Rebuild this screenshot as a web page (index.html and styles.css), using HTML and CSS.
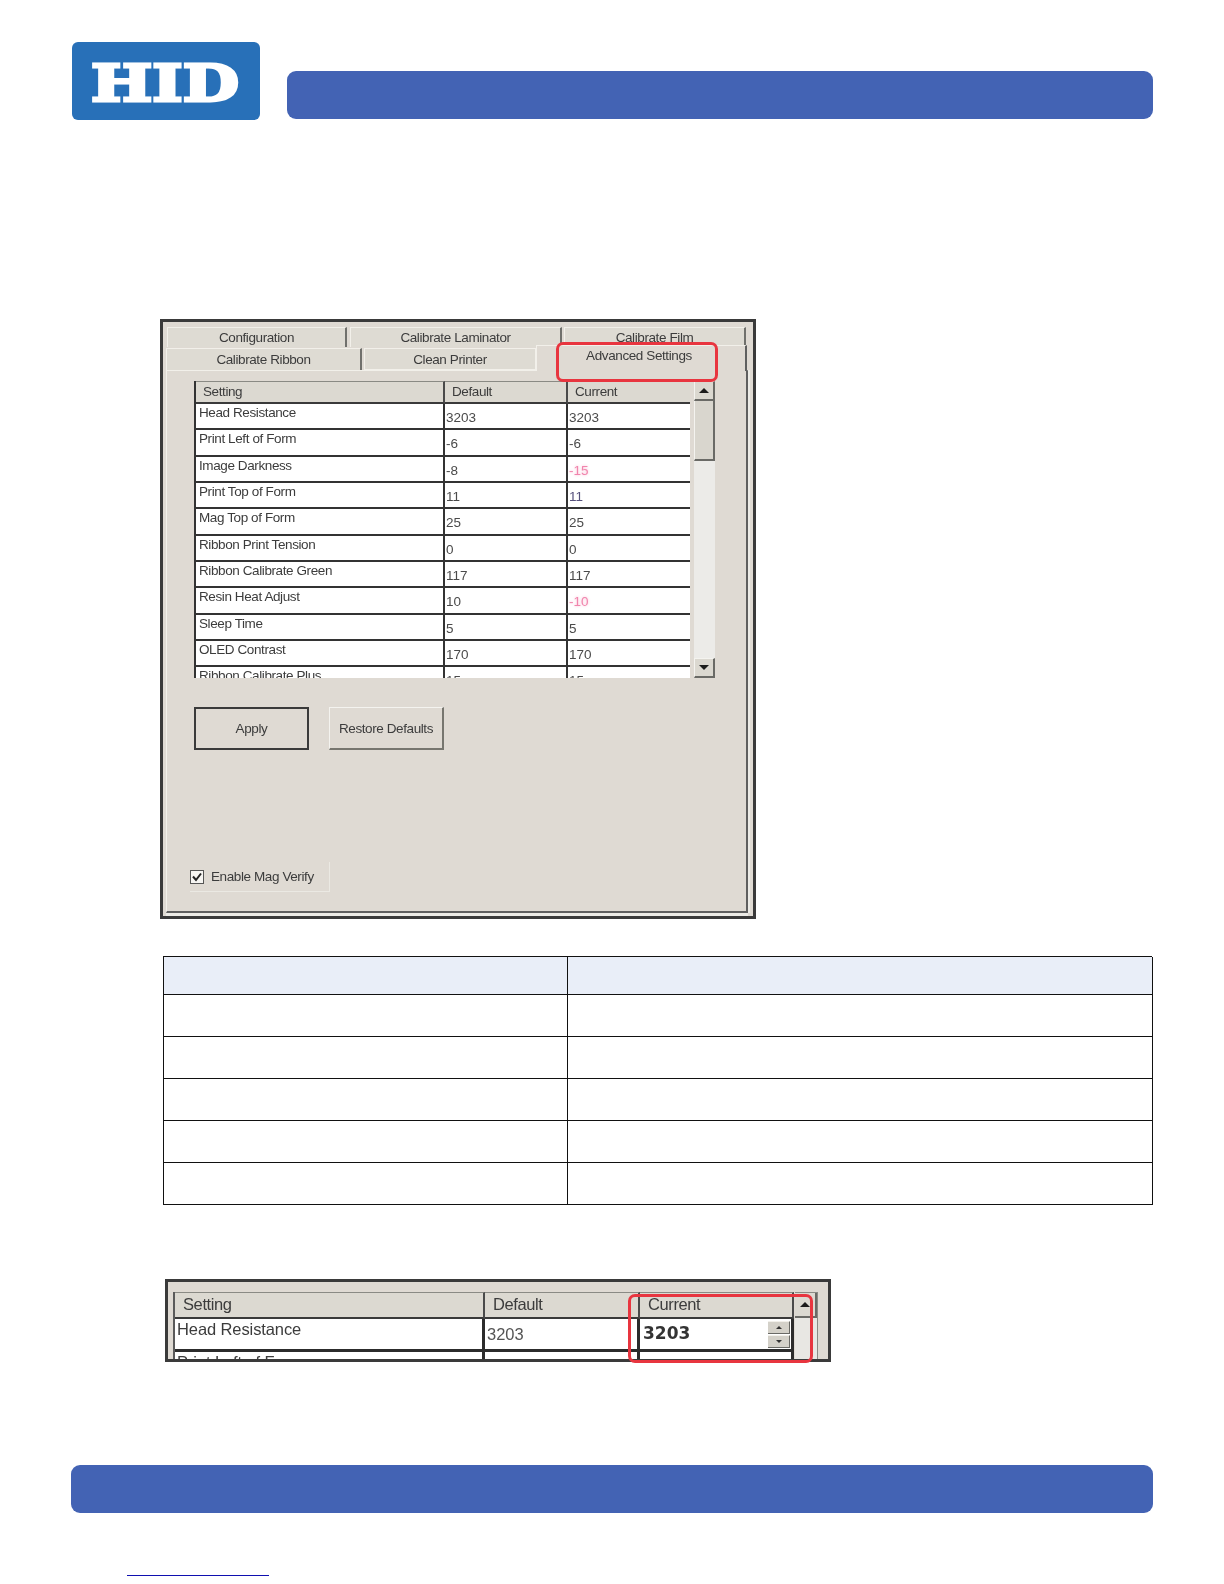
FILE: index.html
```html
<!DOCTYPE html>
<html lang="en">
<head>
<meta charset="utf-8">
<title>Advanced Settings</title>
<link rel="stylesheet" href="styles.css">
</head>
<body>
<div class="page">
  <header class="top">
    <svg class="logo" viewBox="0 0 188 78" width="188" height="78" role="img" aria-label="HID">
      <rect width="188" height="78" rx="6" fill="#2870b8"/>
      <text x="19" y="58.5" class="logo-text" textLength="148" lengthAdjust="spacingAndGlyphs">HID</text>
    </svg>
    <div class="bar top-bar"></div>
  </header>

  <section class="shot shot-one">
    <div class="tabs tabs-back">
      <div class="tab t-config">Configuration</div>
      <div class="tab t-lam">Calibrate Laminator</div>
      <div class="tab t-film">Calibrate Film</div>
    </div>
    <div class="tabs tabs-front">
      <div class="tab t-ribbon">Calibrate Ribbon</div>
      <div class="tab t-clean">Clean Printer</div>
      <div class="tab t-adv">Advanced Settings</div>
    </div>
    <div class="panel">
      <div class="list-wrap">
        <div class="grid">
          <div class="head">Setting</div><div class="head">Default</div><div class="head">Current</div>
          <div class="name">Head Resistance</div><div class="val">3203</div><div class="val">3203</div>
          <div class="name">Print Left of Form</div><div class="val">-6</div><div class="val">-6</div>
          <div class="name">Image Darkness</div><div class="val">-8</div><div class="val pink">-15</div>
          <div class="name">Print Top of Form</div><div class="val">11</div><div class="val violet">11</div>
          <div class="name">Mag Top of Form</div><div class="val">25</div><div class="val">25</div>
          <div class="name">Ribbon Print Tension</div><div class="val">0</div><div class="val">0</div>
          <div class="name">Ribbon Calibrate Green</div><div class="val">117</div><div class="val">117</div>
          <div class="name">Resin Heat Adjust</div><div class="val">10</div><div class="val pink">-10</div>
          <div class="name">Sleep Time</div><div class="val">5</div><div class="val">5</div>
          <div class="name">OLED Contrast</div><div class="val">170</div><div class="val">170</div>
          <div class="name">Ribbon Calibrate Plus</div><div class="val">15</div><div class="val">15</div>
        </div>
        <div class="scroll">
          <div class="sbtn"><span class="arrow up"></span></div>
          <div class="thumb"></div>
          <div class="track"></div>
          <div class="sbtn"><span class="arrow down"></span></div>
        </div>
      </div>
      <div class="actions">
        <div class="btn btn-default">Apply</div>
        <div class="btn">Restore Defaults</div>
      </div>
      <div class="verify">
        <svg class="check" viewBox="0 0 14 14" width="14" height="14" aria-hidden="true">
          <rect x="0.5" y="0.5" width="13" height="13" fill="#f6f5f2" stroke="#555"/>
          <path d="M3 6.5 L6 10 L11 3.5" fill="none" stroke="#222" stroke-width="2"/>
        </svg>
        <span>Enable Mag Verify</span>
      </div>
    </div>
    <div class="ring ring-tab"></div>
  </section>

  <section class="spec">
    <div class="cell hd"></div><div class="cell hd"></div>
    <div class="cell"></div><div class="cell"></div>
    <div class="cell"></div><div class="cell"></div>
    <div class="cell"></div><div class="cell"></div>
    <div class="cell"></div><div class="cell"></div>
    <div class="cell"></div><div class="cell"></div>
  </section>

  <section class="shot shot-two">
    <div class="big-grid">
      <div class="big-head">Setting</div><div class="big-head">Default</div><div class="big-head">Current</div>
      <div class="big-name">Head Resistance</div><div class="big-val">3203</div>
      <div class="big-cur"><b>3203</b>
        <div class="spin"><span class="spin-btn"><span class="arrow mini-up"></span></span><span class="spin-btn"><span class="arrow mini-down"></span></span></div>
      </div>
      <div class="big-name">Print Left of Form</div><div class="big-val"></div><div class="big-val"></div>
    </div>
    <div class="big-scroll">
      <div class="big-sbtn"><span class="arrow up"></span></div>
      <div class="big-track"></div>
    </div>
    <div class="ring ring-cur"></div>
  </section>

  <div class="bar bottom-bar"></div>
  <div class="link-line"></div>
</div>
</body>
</html>
```
FILE: styles.css
```css
* { box-sizing: border-box; }
html, body { margin: 0; padding: 0; background: #fff; }
body { font-family: "Liberation Sans", Arial, sans-serif; }
.page { width: 1224px; height: 1584px; overflow: hidden; display: flex; flex-direction: column; }

.top { display: flex; align-items: flex-end; padding: 42px 0 0 72px; height: 120px; }
.logo { display: block; flex: none; }
.logo-text { font-family: "DejaVu Serif", serif; font-weight: 700; font-size: 51px; fill: #fff; stroke: #fff; stroke-width: 3px; stroke-linejoin: miter; }
.bar { background: #4363b4; border-radius: 9px; height: 48px; }
.top-bar { width: 866px; margin: 0 0 1px 27px; }

.shot { position: relative; background: #dfdad3; border: 3px solid #3a3a3a; color: #3c3c3c; }
.shot-one { width: 596px; height: 600px; margin: 199px 0 0 160px; font-size: 13.5px; letter-spacing: -0.4px; }

.tabs { display: flex; align-items: flex-end; padding-left: 3px; }
.tabs-back { height: 25px; padding-left: 4px; align-items: flex-end; }
.tabs-front { height: 23px; }
.tab { height: 20px; display: flex; align-items: center; justify-content: center; background: #dedbd3; border-top: 1px solid #f2f0ea; border-left: 1px solid #f2f0ea; border-right: 2px solid #70706c; filter: blur(0.4px); }
.t-config { width: 180px; margin-right: 3px; }
.t-lam { width: 212px; margin-right: 2px; }
.t-film { width: 182px; }
.t-ribbon { width: 196px; height: 22px; margin-right: 2px; }
.t-clean { width: 172px; height: 22px; border-right: 1px solid #f2f0ea; border-bottom: 1px solid #f2f0ea; }
.t-adv { width: 211px; height: 26px; margin-bottom: -1px; align-items: flex-start; padding: 2px 4px 0 0; background: #dfdad3; border-right: 2px solid #5f5f5f; position: relative; z-index: 1; }

.panel { height: 543px; margin: 0 5px 0 3px; padding: 10px 0 0 27px; background: #dfdad3; border-top: 1px solid #f2f0ea; border-left: 1px solid #f2f0ea; border-right: 2px solid #5f5f5f; border-bottom: 2px solid #5f5f5f; box-shadow: 0 3px 0 #ecebe6, 2px 0 0 #ecebe6; }

.list-wrap { display: flex; height: 297px; }
.grid { display: grid; width: 496px; height: 297px; overflow: hidden; grid-template-columns: 249px 123px 124px; grid-template-rows: 23px repeat(11, 26.35px); border-left: 2px solid #333; filter: blur(0.4px); }
.head { background: #dcd9d1; padding: 2px 0 0 7px; border-top: 1px solid #8a8a84; border-right: 2px solid #4a4a4a; border-bottom: 2px solid #3a3a3a; }
.name, .val { background: #fff; border-right: 2px solid #333; border-bottom: 2px solid #333; white-space: nowrap; }
.name { padding: 0 0 0 3px; line-height: 18px; }
.val { padding: 5px 0 0 1px; line-height: 18px; font-size: 13.5px; color: #4a4a4a; letter-spacing: 0; }
.pink { color: #f185ad; text-shadow: 0 0 3px #f7b7cf; }
.violet { color: #55507c; }

.scroll { width: 21px; margin-left: 4px; display: flex; flex-direction: column; background: #ecebe8; }
.sbtn { height: 20px; flex: none; background: #dbd8d0; border-top: 1px solid #f4f3ef; border-left: 1px solid #f4f3ef; border-right: 2px solid #6a6a66; border-bottom: 2px solid #6a6a66; display: flex; align-items: center; justify-content: center; }
.thumb { height: 60px; flex: none; background: #d9d6ce; border-right: 2px solid #6a6a66; border-bottom: 2px solid #6a6a66; border-left: 1px solid #f4f3ef; }
.track { flex: 1; }
.arrow { display: block; width: 0; height: 0; border-left: 5px solid transparent; border-right: 5px solid transparent; }
.arrow.up { border-bottom: 5px solid #1c1c1c; }
.arrow.down { border-top: 5px solid #1c1c1c; }
.arrow.mini-up { border-left-width: 3px; border-right-width: 3px; border-bottom: 3px solid #333; }
.arrow.mini-down { border-left-width: 3px; border-right-width: 3px; border-top: 3px solid #333; }

.actions { display: flex; gap: 20px; margin-top: 29px; }
.btn { width: 115px; height: 43px; display: flex; align-items: center; justify-content: center; border-top: 1px solid #f4f3ef; border-left: 1px solid #f4f3ef; border-right: 2px solid #77766f; border-bottom: 2px solid #77766f; filter: blur(0.4px); }
.btn-default { border: 2px solid #3a3a3a; }

.verify { display: flex; align-items: center; gap: 7px; width: 140px; height: 30px; margin: 112px 0 0 -4px; border-right: 1px solid #ebe9e3; border-bottom: 1px solid #ebe9e3; filter: blur(0.4px); }
.check { flex: none; }

.ring { position: absolute; border: 3px solid #e8353f; border-radius: 7px; z-index: 2; }
.ring-tab { left: 393px; top: 20px; width: 162px; height: 40px; }

.spec { display: grid; width: 989px; margin: 37px 0 0 163px; grid-template-columns: 404px 585px; grid-template-rows: 38px repeat(5, 42px); border-top: 1px solid #111; border-left: 1px solid #111; }
.cell { border-right: 1px solid #111; border-bottom: 1px solid #111; }
.cell.hd { background: #e9eef8; }

.shot-two { width: 666px; height: 83px; margin: 74px 0 0 165px; display: flex; font-size: 16.5px; padding: 10px 0 0 5px; overflow: visible; }
.big-grid { display: grid; width: 621px; height: 67px; overflow: hidden; grid-template-columns: 310px 155px 154px; grid-template-rows: 27px 33px 20px; border-left: 2px solid #5a5a5a; filter: blur(0.4px); }
.big-head { background: #dcd9d1; padding: 0 0 0 8px; line-height: 22px; border-top: 1px solid #8a8a84; border-right: 2px solid #4a4a4a; border-bottom: 2px solid #3a3a3a; letter-spacing: -0.4px; }
.big-name, .big-val, .big-cur { background: #fff; border-right: 3px solid #2c2c2c; border-bottom: 3px solid #2c2c2c; white-space: nowrap; }
.big-name { line-height: 18px; padding: 1px 0 0 2px; letter-spacing: -0.1px; }
.big-val { line-height: 22px; padding: 4px 0 0 2px; color: #555; }
.big-cur { position: relative; padding: 2px 0 0 3px; line-height: 24px; font-family: "DejaVu Sans", sans-serif; font-size: 17px; }
.big-cur b { font-weight: 700; color: #333; }
.spin { position: absolute; right: 1px; top: 2px; width: 22px; display: flex; flex-direction: column; gap: 1px; }
.spin-btn { height: 13px; background: #d4d1c9; border-top: 1px solid #f2f0ea; border-right: 1px solid #6a6a66; border-bottom: 1px solid #6a6a66; display: flex; align-items: center; justify-content: center; }
.big-scroll { width: 23px; margin-left: 1px; height: 67px; display: flex; flex-direction: column; background: #dcd9d1; border-top: 1px solid #8a8a84; border-right: 1px solid #8a8a84; }
.big-sbtn { height: 25px; flex: none; display: flex; align-items: center; justify-content: center; border-right: 2px solid #6a6a66; border-bottom: 2px solid #6a6a66; }
.big-track { flex: 1; background: #e8e7e3; }
.ring-cur { left: 460px; top: 12px; width: 185px; height: 69px; }

.bottom-bar { flex: none; width: 1082px; margin: 103px 0 0 71px; }
.link-line { flex: none; width: 142px; height: 1px; margin: 62px 0 0 127px; background: #1010b0; }
```
